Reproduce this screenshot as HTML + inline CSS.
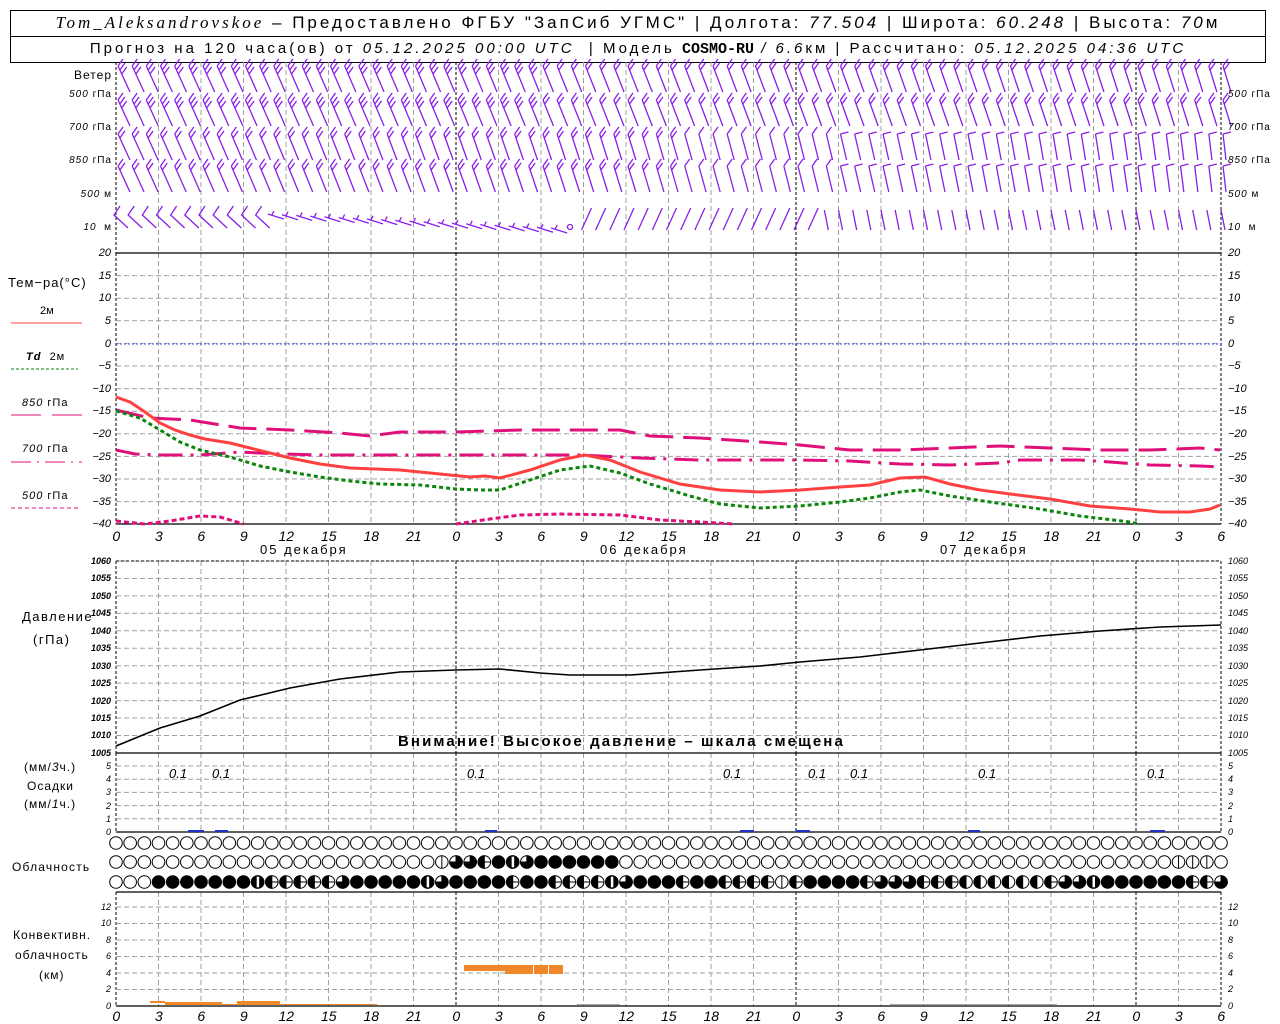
<!DOCTYPE html>
<html><head><meta charset="utf-8">
<style>
html,body{margin:0;padding:0;background:#fff;}
body{width:1280px;height:1024px;position:relative;overflow:hidden;font-family:"Liberation Sans","DejaVu Sans",sans-serif;color:#000;}
.t{position:absolute;white-space:nowrap;line-height:1;}
.r{position:absolute;white-space:nowrap;line-height:1;text-align:right;}
.i{font-style:italic;}
.row{position:absolute;display:flex;}
.row span{display:block;width:42.5px;text-align:center;font-style:italic;font-size:14px;}
.col{position:absolute;display:flex;flex-direction:column;font-style:italic;}
.col span{display:flex;align-items:center;}
.L span{justify-content:flex-end;}
.hdr{position:absolute;left:10px;width:1254px;border:1px solid #000;text-align:center;line-height:24px;}
</style></head><body>
<div class="hdr" style="top:10px;height:25px;font-size:17px;letter-spacing:3px;"><span class="i" style="font-family:'Liberation Serif',serif;">Tom_Aleksandrovskoe</span> – Предоставлено ФГБУ "ЗапСиб УГМС" | Долгота: <span class="i">77.504</span> | Широта: <span class="i">60.248</span> | Высота: <span class="i">70</span>м</div>
<div class="hdr" style="top:36px;height:25px;font-size:15px;letter-spacing:3px;">Прогноз на 120 часа(ов) от <span class="i">05.12.2025 00:00 UTC</span> &nbsp;| Модель <b style="font-family:'Liberation Mono',monospace;letter-spacing:0">COSMO-RU</b> <span class="i">/ 6.6</span>км | Рассчитано: <span class="i">05.12.2025 04:36 UTC</span></div>

<svg id="g" width="1280" height="1024" style="position:absolute;left:0;top:0" xmlns="http://www.w3.org/2000/svg">
<g id="grid"></g>
<g id="barbs" stroke="#8a1ee8" stroke-width="1.3" fill="none"></g>
<g id="clouds" stroke="#000" stroke-width="1"></g>
<line x1="116" y1="344" x2="1221" y2="344" stroke="#2a4bff" stroke-width="1" stroke-dasharray="2,2"/>
<polyline fill="none" stroke="#e0107a" stroke-width="3" stroke-dasharray="28,10" points="116,410 150,418 190,420 240,428 290,430 340,433 370,436 400,432 456,432 520,430 580,430 620,430 650,436 700,438 760,442 800,445 850,450 900,450 950,448 1000,446 1050,448 1100,450 1150,450 1200,448 1220,450"/>
<polyline fill="none" stroke="#e0107a" stroke-width="3" stroke-dasharray="24,8,3,8" points="116,450 135,454 160,455 200,455 240,452 280,454 320,455 400,455 456,455 520,455 580,455 640,458 700,460 750,460 800,460 850,461 900,464 950,465 1000,463 1020,460 1080,460 1110,462 1150,465 1200,466 1220,467"/>
<polyline fill="none" stroke="#e0107a" stroke-width="3" stroke-dasharray="5,3" points="116,521 145,524 170,521 200,516 220,517 244,524"/>
<polyline fill="none" stroke="#e0107a" stroke-width="3" stroke-dasharray="5,3" points="456,524 490,519 520,515 560,514 620,515 660,520 700,522 735,524"/>
<polyline fill="none" stroke="#0a860a" stroke-width="3" stroke-dasharray="4,3" points="116,411 140,418 160,430 180,442 200,450 230,457 260,466 290,472 320,477 350,481 380,484 420,485 456,489 480,490 500,490 530,480 560,470 590,466 620,473 650,484 690,496 720,504 760,508 800,506 840,502 870,498 900,492 920,490 950,496 990,502 1040,509 1080,516 1130,522 1140,524"/>
<polyline fill="none" stroke="#ff4040" stroke-width="3" points="116,397 130,402 145,412 160,423 175,430 190,435 205,439 230,443 250,448 270,453 290,458 320,464 350,468 400,470 440,474 470,477 485,476 500,478 530,470 560,460 585,455 610,460 640,472 680,484 720,490 760,492 800,490 840,487 870,485 900,478 925,477 950,484 980,490 1010,494 1050,499 1090,506 1130,509 1160,512 1190,512 1210,509 1220,505"/>
<line x1="11" y1="323" x2="82" y2="323" stroke="#ff4040" stroke-width="1"/>
<line x1="11" y1="369" x2="78" y2="369" stroke="#0a860a" stroke-width="1" stroke-dasharray="3,2"/>
<line x1="11" y1="415" x2="41" y2="415" stroke="#e0107a"/><line x1="52" y1="415" x2="82" y2="415" stroke="#e0107a"/>
<line x1="11" y1="462" x2="82" y2="462" stroke="#e0107a" stroke-dasharray="20,6,2,6"/>
<line x1="11" y1="508" x2="78" y2="508" stroke="#e0107a" stroke-dasharray="4,3"/>
<polyline fill="none" stroke="#000" stroke-width="1.6" points="116,746 160,728 200,716 240,700 290,688 340,679 400,672 456,670 500,669 540,673 570,675 630,675 700,670 760,666 800,662 860,657 920,650 980,643 1040,636 1100,631 1160,627 1221,625"/>
<g fill="#2233cc"><rect x="188" y="830" width="16" height="2"/><rect x="215" y="830" width="13" height="2"/><rect x="485" y="830" width="12" height="2"/><rect x="740" y="830" width="14" height="2"/><rect x="796" y="830" width="14" height="2"/><rect x="968" y="830" width="12" height="2"/><rect x="1150" y="830" width="15" height="2"/></g>
<g fill="#f0882a"><rect x="150" y="1001" width="15" height="2"/><rect x="165" y="1002" width="57" height="3"/><rect x="237" y="1001" width="43" height="3"/><rect x="222" y="1004" width="155" height="1"/><rect x="464" y="965" width="99" height="6"/><rect x="505" y="965" width="58" height="9"/></g>
<g fill="#fff"><rect x="533" y="964" width="1" height="11"/><rect x="548" y="964" width="1" height="11"/></g>
<g fill="#aaa"><rect x="577" y="1004" width="43" height="1"/><rect x="890" y="1004" width="167" height="1"/></g>
</svg>

<div class="r" style="right:1168px;top:69px;font-size:12px;letter-spacing:1px;">Ветер</div>
<div class="r" style="right:1168px;top:90px;font-size:10px;letter-spacing:1px;"><i>500</i> гПа</div>
<div class="r" style="right:1168px;top:123px;font-size:10px;letter-spacing:1px;"><i>700</i> гПа</div>
<div class="r" style="right:1168px;top:156px;font-size:10px;letter-spacing:1px;"><i>850</i> гПа</div>
<div class="r" style="right:1168px;top:190px;font-size:10px;letter-spacing:1px;"><i>500</i> м</div>
<div class="r" style="right:1168px;top:223px;font-size:10px;letter-spacing:1px;"><i>10</i> &nbsp;м</div>
<div class="t" style="left:1228px;top:90px;font-size:10px;letter-spacing:1px;"><i>500</i> гПа</div>
<div class="t" style="left:1228px;top:123px;font-size:10px;letter-spacing:1px;"><i>700</i> гПа</div>
<div class="t" style="left:1228px;top:156px;font-size:10px;letter-spacing:1px;"><i>850</i> гПа</div>
<div class="t" style="left:1228px;top:190px;font-size:10px;letter-spacing:1px;"><i>500</i> м</div>
<div class="t" style="left:1228px;top:223px;font-size:10px;letter-spacing:1px;"><i>10</i> &nbsp;м</div>

<div class="t" style="left:8px;top:276px;font-size:13px;letter-spacing:1px;">Тем−ра(°C)</div>
<div class="t" style="left:40px;top:306px;font-size:11px;">2м</div>
<div class="t" style="left:26px;top:352px;font-size:11px;letter-spacing:1px;"><b><i>Td</i></b> &nbsp;2м</div>
<div class="t" style="left:22px;top:398px;font-size:11px;letter-spacing:1px;"><i>850</i> гПа</div>
<div class="t" style="left:22px;top:444px;font-size:11px;letter-spacing:1px;"><i>700</i> гПа</div>
<div class="t" style="left:22px;top:491px;font-size:11px;letter-spacing:1px;"><i>500</i> гПа</div>

<div class="col L" style="left:60px;top:242px;width:51px;font-size:11px;"><span style="height:22.6px">20</span><span style="height:22.6px">15</span><span style="height:22.6px">10</span><span style="height:22.6px">5</span><span style="height:22.6px">0</span><span style="height:22.6px">−5</span><span style="height:22.6px">−10</span><span style="height:22.6px">−15</span><span style="height:22.6px">−20</span><span style="height:22.6px">−25</span><span style="height:22.6px">−30</span><span style="height:22.6px">−35</span><span style="height:22.6px">−40</span></div>
<div class="col" style="left:1228px;top:242px;font-size:11px;"><span style="height:22.6px">20</span><span style="height:22.6px">15</span><span style="height:22.6px">10</span><span style="height:22.6px">5</span><span style="height:22.6px">0</span><span style="height:22.6px">−5</span><span style="height:22.6px">−10</span><span style="height:22.6px">−15</span><span style="height:22.6px">−20</span><span style="height:22.6px">−25</span><span style="height:22.6px">−30</span><span style="height:22.6px">−35</span><span style="height:22.6px">−40</span></div>

<div class="row" style="left:95px;top:528px;"><span>0</span><span>3</span><span>6</span><span>9</span><span>12</span><span>15</span><span>18</span><span>21</span><span>0</span><span>3</span><span>6</span><span>9</span><span>12</span><span>15</span><span>18</span><span>21</span><span>0</span><span>3</span><span>6</span><span>9</span><span>12</span><span>15</span><span>18</span><span>21</span><span>0</span><span>3</span><span>6</span></div>
<div class="t" style="left:260px;top:543px;font-size:13px;letter-spacing:2px;">05 декабря</div>
<div class="t" style="left:600px;top:543px;font-size:13px;letter-spacing:2px;">06 декабря</div>
<div class="t" style="left:940px;top:543px;font-size:13px;letter-spacing:2px;">07 декабря</div>

<div class="t" style="left:22px;top:610px;font-size:13px;letter-spacing:1.5px;">Давление</div>
<div class="t" style="left:33px;top:633px;font-size:13px;letter-spacing:1.5px;">(гПа)</div>
<div class="col L" style="left:70px;top:552.3px;width:41px;font-size:9px;font-weight:bold;"><span style="height:17.45px">1060</span><span style="height:17.45px">1055</span><span style="height:17.45px">1050</span><span style="height:17.45px">1045</span><span style="height:17.45px">1040</span><span style="height:17.45px">1035</span><span style="height:17.45px">1030</span><span style="height:17.45px">1025</span><span style="height:17.45px">1020</span><span style="height:17.45px">1015</span><span style="height:17.45px">1010</span><span style="height:17.45px">1005</span></div>
<div class="col" style="left:1228px;top:552.3px;font-size:9px;"><span style="height:17.45px">1060</span><span style="height:17.45px">1055</span><span style="height:17.45px">1050</span><span style="height:17.45px">1045</span><span style="height:17.45px">1040</span><span style="height:17.45px">1035</span><span style="height:17.45px">1030</span><span style="height:17.45px">1025</span><span style="height:17.45px">1020</span><span style="height:17.45px">1015</span><span style="height:17.45px">1010</span><span style="height:17.45px">1005</span></div>
<div class="t" style="left:398px;top:734px;font-size:15px;font-weight:bold;letter-spacing:2.1px;">Внимание! Высокое давление – шкала смещена</div>

<div class="t" style="left:24px;top:761px;font-size:12px;letter-spacing:1px;">(мм/<i>3</i>ч.)</div>
<div class="t" style="left:27px;top:780px;font-size:12px;letter-spacing:1px;">Осадки</div>
<div class="t" style="left:24px;top:798px;font-size:12px;letter-spacing:1px;">(мм/<i>1</i>ч.)</div>
<div class="col L" style="left:90px;top:759.4px;width:21px;font-size:9px;"><span style="height:13.2px">5</span><span style="height:13.2px">4</span><span style="height:13.2px">3</span><span style="height:13.2px">2</span><span style="height:13.2px">1</span><span style="height:13.2px">0</span></div>
<div class="col" style="left:1228px;top:759.4px;font-size:9px;"><span style="height:13.2px">5</span><span style="height:13.2px">4</span><span style="height:13.2px">3</span><span style="height:13.2px">2</span><span style="height:13.2px">1</span><span style="height:13.2px">0</span></div>
<div class="t i" style="left:169px;top:767px;font-size:13px;">0.1</div>
<div class="t i" style="left:212px;top:767px;font-size:13px;">0.1</div>
<div class="t i" style="left:467px;top:767px;font-size:13px;">0.1</div>
<div class="t i" style="left:723px;top:767px;font-size:13px;">0.1</div>
<div class="t i" style="left:808px;top:767px;font-size:13px;">0.1</div>
<div class="t i" style="left:850px;top:767px;font-size:13px;">0.1</div>
<div class="t i" style="left:978px;top:767px;font-size:13px;">0.1</div>
<div class="t i" style="left:1147px;top:767px;font-size:13px;">0.1</div>

<div class="t" style="left:12px;top:861px;font-size:12px;letter-spacing:1.2px;">Облачность</div>

<div class="t" style="left:13px;top:929px;font-size:12px;letter-spacing:1px;">Конвективн.</div>
<div class="t" style="left:15px;top:949px;font-size:12px;letter-spacing:1px;">облачность</div>
<div class="t" style="left:39px;top:969px;font-size:12px;letter-spacing:1px;">(км)</div>
<div class="col L" style="left:90px;top:898.7px;width:21px;font-size:9px;"><span style="height:16.5px">12</span><span style="height:16.5px">10</span><span style="height:16.5px">8</span><span style="height:16.5px">6</span><span style="height:16.5px">4</span><span style="height:16.5px">2</span><span style="height:16.5px">0</span></div>
<div class="col" style="left:1228px;top:898.7px;font-size:9px;"><span style="height:16.5px">12</span><span style="height:16.5px">10</span><span style="height:16.5px">8</span><span style="height:16.5px">6</span><span style="height:16.5px">4</span><span style="height:16.5px">2</span><span style="height:16.5px">0</span></div>
<div class="row" style="left:95px;top:1008px;"><span>0</span><span>3</span><span>6</span><span>9</span><span>12</span><span>15</span><span>18</span><span>21</span><span>0</span><span>3</span><span>6</span><span>9</span><span>12</span><span>15</span><span>18</span><span>21</span><span>0</span><span>3</span><span>6</span><span>9</span><span>12</span><span>15</span><span>18</span><span>21</span><span>0</span><span>3</span><span>6</span></div>

<script>
(function(){
var NS="http://www.w3.org/2000/svg";
function el(p,n,a){var e=document.createElementNS(NS,n);for(var k in a)e.setAttribute(k,a[k]);p.appendChild(e);return e;}
var X0=116,X1=1221,dx=(X1-X0)/78;
function X(h){return X0+h*dx;}
var g=document.getElementById("grid");
var panels=[[62,253],[253,524],[561,753],[753,832],[892,1006]];
panels.forEach(function(p){
 for(var h=3;h<78;h+=3){ if(h%24==0) continue;
  el(g,"line",{x1:X(h),y1:p[0],x2:X(h),y2:p[1],stroke:"#a0a0a0","stroke-dasharray":"5,3"});}
 [24,48,72].forEach(function(h){el(g,"line",{x1:X(h),y1:p[0],x2:X(h),y2:p[1],stroke:"#000","stroke-dasharray":"3,2"});});
 el(g,"line",{x1:X0,y1:p[0],x2:X0,y2:p[1],stroke:"#000","stroke-dasharray":"3,2"});
 el(g,"line",{x1:X1,y1:p[0],x2:X1,y2:p[1],stroke:"#000","stroke-dasharray":"3,2"});
});
function hg(y0,step,n){for(var i=0;i<n;i++){var y=y0+i*step;el(g,"line",{x1:X0,y1:y,x2:X1,y2:y,stroke:"#a0a0a0","stroke-dasharray":"5,3"});}}
hg(253+22.6,22.6,11);hg(561,17.45,11);hg(766,13.2,5);hg(907,16.5,6);
[253,524,753,832,892,1006].forEach(function(y){el(g,"line",{x1:X0,y1:y,x2:X1,y2:y,stroke:"#000","stroke-width":1.3});});
el(g,"line",{x1:X0,y1:561,x2:X1,y2:561,stroke:"#000","stroke-dasharray":"3,2"});
var b=document.getElementById("barbs");
var tops=[66,100,134,166];
for(var r=0;r<4;r++){
 for(var h=0;h<79;h++){
  var x=X(h)+2, t=tops[r];
  var late=h/78;
  var sdx = (r>=2? 12-9*late : 12-4*late);
  var L=26;
  var x2=x+sdx, y2=t+L;
  var d="M"+x+","+t+" L"+x2+","+y2;
  var nf = r<2 ? (h<30?3:2) : (h<40?2:1);
  var fx = (r>=2&&h>50)?8:5, fy=(r>=2&&h>50)?-2:-7;
  for(var k=0;k<nf;k++){var px=x+sdx*(k*4/L), py=t+k*4; d+=" M"+px+","+py+" l"+fx+","+fy;}
  el(b,"path",{d:d});
 }
}
for(var h=0;h<79;h++){
 var x=X(h)+2,d;
 if(h<11){d="M"+(x+2)+","+206+" L"+(x-4)+","+215+" L"+(x+10)+","+228;}
 else if(h<32){var yy=214+ (h-11)*0.7; d="M"+(x-6)+","+(yy)+" L"+(x+10)+","+(yy+5)+" M"+(x-2)+","+(yy+1)+" l2,-4";}
 else if(h==32){el(b,"circle",{cx:570,cy:227,r:2.5});continue;}
 else if(h<50){d="M"+(x+6)+","+208+" L"+(x-4)+","+230;}
 else {d="M"+(x-2)+","+210+" L"+(x+2)+","+230;}
 el(b,"path",{d:d});
}
var c=document.getElementById("clouds");
var row2={};
"23v 24q 25q 26h 27b 28w 29q 30b 31b 32b 33b 34b 35b 75v 76v 77v".split(" ").forEach(function(s){row2[parseInt(s)]=s.slice(-1);});
var r3="OOObbbbbbbwhhhhhqbbbbbwqbbbbhbbhhhhwqbbbhbbhhhhvhbbbbhqqqhhhddddddhqqwbbbbbbhhq";
var rows=[843,862,882];
for(var h=0;h<79;h++){
 for(var r=0;r<3;r++){
  var cx=X(h),cy=rows[r],R=6.3,type;
  if(r==0)type="O";else if(r==1)type=row2[h]||"O";else type=r3[h]||"b";
  if(type=="b"){el(c,"circle",{cx:cx,cy:cy,r:R,fill:"#000"});continue;}
  el(c,"circle",{cx:cx,cy:cy,r:R,fill:"#fff"});
  if(type=="v"){el(c,"line",{x1:cx,y1:cy-R,x2:cx,y2:cy+R});}
  if(type=="q"){el(c,"path",{d:"M"+cx+","+cy+" L"+cx+","+(cy-R)+" A"+R+","+R+" 0 1 1 "+(cx-R)+","+cy+" Z",fill:"#000"});}
  if(type=="h"){el(c,"path",{d:"M"+cx+","+(cy-R)+" A"+R+","+R+" 0 0 0 "+cx+","+(cy+R)+" Z",fill:"#000"});el(c,"line",{x1:cx,y1:cy,x2:cx+R,y2:cy});}
  if(type=="d"){el(c,"path",{d:"M"+cx+","+(cy-R)+" A"+R+","+R+" 0 0 0 "+cx+","+(cy+R)+" Z",fill:"#000"});}
  if(type=="w"){el(c,"circle",{cx:cx,cy:cy,r:R,fill:"#000"});el(c,"rect",{x:cx-1,y:cy-R+1,width:2.5,height:2*R-2,fill:"#fff",stroke:"none"});}
 }
}
})();
</script>
</body></html>
